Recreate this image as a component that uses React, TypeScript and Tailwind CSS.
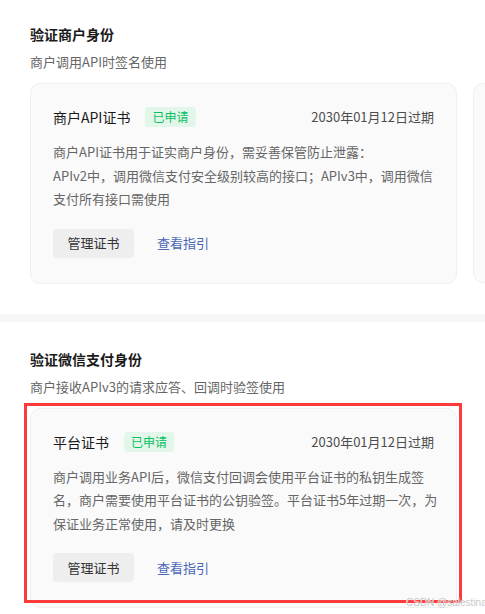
import React from "react";

const FONT = { fontFamily: '"Noto Sans CJK SC", "Noto Sans", sans-serif' };

function Card({
  title,
  lines,
  highlight,
}: {
  title: string;
  lines: string[];
  highlight?: boolean;
}) {
  return (
    <div className="relative w-[427px] shrink-0 rounded-[10px] border border-[#f0f0f0] bg-[#fafafa] px-[22px] pt-[23px] pb-[25px]">
      <div className="flex h-[20px] items-center justify-between">
        <div className="flex items-center">
          <span className="text-[14px] leading-[20px] text-[#1a1a1a]">{title}</span>
          <span className="ml-[15px] flex h-[20px] items-center rounded-[4px] bg-[#e2f6ea] px-[7px] text-[12px] leading-[20px] text-[#07c160]">
            已申请
          </span>
        </div>
        <span className="text-[13px] leading-[20px] text-[#4d4d4d]">2030年01月12日过期</span>
      </div>
      <div className="mt-[13px] text-[13px] leading-[23.5px] text-[#666666]">
        {lines.map((l, i) => (
          <div key={i} className="whitespace-nowrap">
            {l}
          </div>
        ))}
      </div>
      <div className="mt-[18px] flex items-center">
        <button className="flex h-[29px] w-[81px] items-center justify-center rounded-[4px] bg-[#eeeeee] text-[13px] text-[#333333]">
          管理证书
        </button>
        <span className="ml-[23px] text-[13px] text-[#4a68b8]">查看指引</span>
      </div>
      {highlight && (
        <div className="pointer-events-none absolute left-[-7px] top-[-6px] h-[200px] w-[438px] border-[3px] border-[#ff3a3a]" />
      )}
    </div>
  );
}

export default function App() {
  return (
    <div className="relative h-[614px] w-[485px] overflow-hidden bg-white" style={FONT}>
      <section className="px-[30px] pt-[24px] pb-[30px]">
        <div className="text-[14px] font-bold leading-[20px] text-[#1a1a1a]">验证商户身份</div>
        <div className="mt-[8px] text-[13px] leading-[20px] text-[#666666]">商户调用API时签名使用</div>
        <div className="mt-[11px] flex gap-[16px]">
          <Card
            title="商户API证书"
            lines={[
              "商户API证书用于证实商户身份，需妥善保管防止泄露：",
              "APIv2中，调用微信支付安全级别较高的接口；APIv3中，调用微信",
              "支付所有接口需使用",
            ]}
          />
          <div className="h-[200px] w-[427px] shrink-0 rounded-[10px] border border-[#f0f0f0] bg-[#fafafa]" />
        </div>
      </section>
      <div className="h-[8px] bg-[#f7f7f7]" />
      <section className="px-[30px] pt-[27px] pb-[30px]">
        <div className="text-[14px] font-bold leading-[20px] text-[#1a1a1a]">验证微信支付身份</div>
        <div className="mt-[8px] text-[13px] leading-[20px] text-[#666666]">商户接收APIv3的请求应答、回调时验签使用</div>
        <div className="mt-[11px] flex">
          <Card
            title="平台证书"
            highlight
            lines={[
              "商户调用业务API后，微信支付回调会使用平台证书的私钥生成签",
              "名，商户需要使用平台证书的公钥验签。平台证书5年过期一次，为",
              "保证业务正常使用，请及时更换",
            ]}
          />
        </div>
      </section>
      <div
        className="pointer-events-none absolute left-[406px] top-[596px] whitespace-nowrap text-[10px] leading-[13px] text-[#c8c8c8]"
        style={{ fontFamily: '"Liberation Sans", sans-serif', textShadow: "0 0 1px #ffffff" }}
      >
        CSDN @salestina
      </div>
    </div>
  );
}
